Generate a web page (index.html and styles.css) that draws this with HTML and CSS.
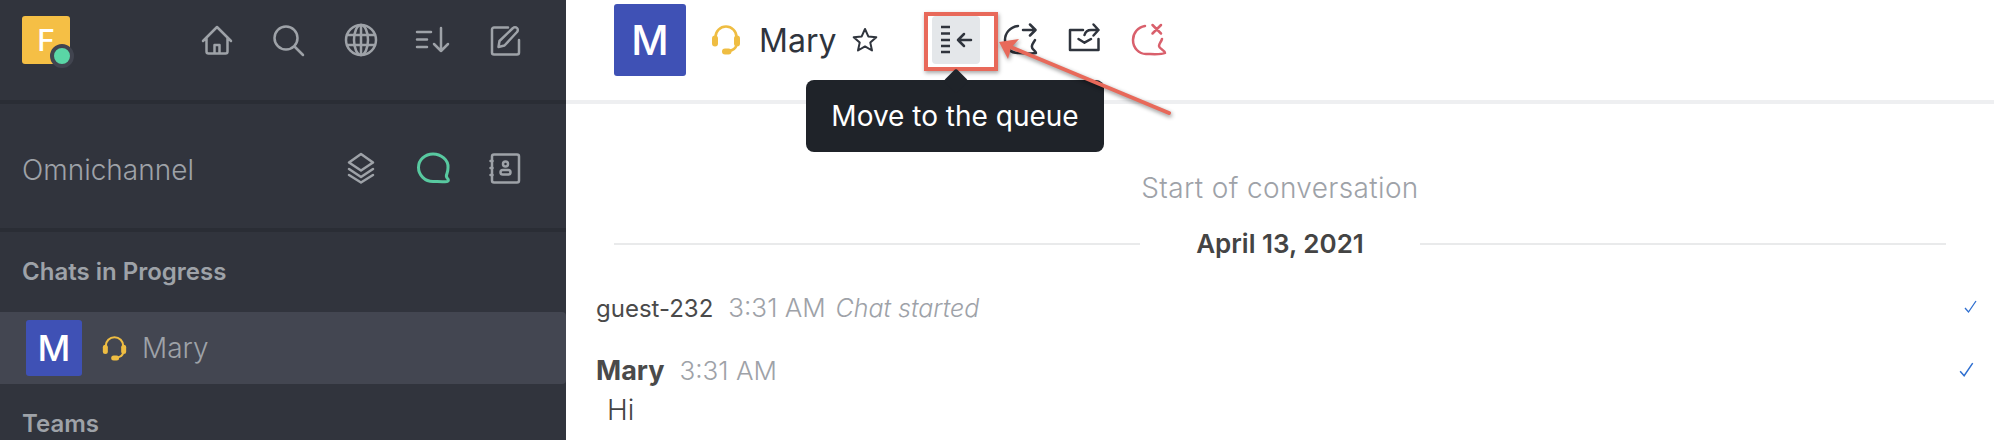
FILE: index.html
```html
<!DOCTYPE html>
<html lang="en">
<head>
    <meta charset="UTF-8">
    <meta name="viewport" content="width=device-width, initial-scale=1.0">
    <title>Omnichannel</title>
    <link rel="stylesheet" href="styles.css">
</head>
<body>
    <div class="sidebar">
        <div class="topbar">
            <div class="logo">F<span class="status-dot"></span></div>
            <div class="icons">
                <svg class="icon" viewBox="0 0 32 32"><path d="M2 17 16 3l14 14M5.500 14v13.500a2 2 0 0 0 2 2h17a2 2 0 0 0 2-2V14M13.500 29v-8h5v8"/></svg>
                <svg class="icon" viewBox="0 0 32 32"><circle cx="13" cy="14" r="11.500"/><path d="m22 23 8 8"/></svg>
                <svg class="icon" viewBox="0 0 32 32"><circle cx="16" cy="16" r="15"/><ellipse cx="16" cy="16" rx="7" ry="15"/><path d="M2 11h28M2 21h28M16 1v30"/></svg>
                <svg class="icon" viewBox="0 0 32 32"><path d="M0 8h14M0 15.500h10M0 23h10M24 4v23M17 20l7 7 7-7"/></svg>
                <svg class="icon" viewBox="0 0 32 32"><path d="M19 3.500H5a2 2 0 0 0-2 2v23a2 2 0 0 0 2 2h23a2 2 0 0 0 2-2V16"/><path d="m9.500 23 1-6L24 4a2.800 2.800 0 0 1 4 0 2.800 2.800 0 0 1 0 4L15.500 21.500z"/></svg>
            </div>
        </div>
        <div class="section-bar">
            <span class="section-title">Omnichannel</span>
            <div class="icons">
                <svg class="icon" viewBox="0 0 32 32"><path d="m16 2 12 8.500-12 8-12-8zM4 17l12 8 12-8M4 23l12 7.500 12-7.500"/></svg>
                <svg class="icon icon-green" viewBox="0 0 32 32"><path d="M16 2C8 2 1.500 8 1.500 15.500S8 29.500 16 29.500c4 0 10 .5 14 0 2-.5 1.500-2 .5-3-1.500-1.500-1.500-3-.5-5 .5-1.500 1-4 1-6C31.500 8 24 2 16 2z"/></svg>
                <svg class="icon" viewBox="0 0 32 32"><rect x="3" y="2.500" width="27" height="28" rx="2"/><path d="M1.500 9h2M1.500 16h2M1.500 23h2"/><circle cx="16.500" cy="12" r="2.500"/><rect x="11.500" y="18" width="10" height="4.500" rx="2.250"/></svg>
            </div>
        </div>
        <div class="list-title">Chats in Progress</div>
        <div class="chat-row">
            <div class="avatar">M</div>
            <svg class="headset" viewBox="0 0 30 30"><path d="M4.500 12a10.500 10.500 0 0 1 21 0M25.500 20q-1 5-8 6"/><rect class="fill" x="1" y="10.500" width="6" height="11" rx="3"/><rect class="fill" x="23" y="10.500" width="6" height="11" rx="3"/><rect class="fill" x="11" y="23.500" width="9.500" height="6" rx="3"/></svg>
            <span class="chat-name">Mary</span>
        </div>
        <div class="list-title list-title-teams">Teams</div>
    </div>

    <div class="main">
        <div class="header">
            <div class="avatar avatar-big">M</div>
            <svg class="headset headset-big" viewBox="0 0 30 30"><path d="M4.500 12a10.500 10.500 0 0 1 21 0M25.500 20q-1 5-8 6"/><rect class="fill" x="1" y="10.500" width="6" height="11" rx="3"/><rect class="fill" x="23" y="10.500" width="6" height="11" rx="3"/><rect class="fill" x="11" y="23.500" width="9.500" height="6" rx="3"/></svg>
            <span class="header-name">Mary</span>
            <svg class="star" viewBox="0 0 26 26"><path d="m13 2 3.300 7.400 8 .8-6 5.400 1.700 7.900-7-4.100-7 4.100 1.700-7.900-6-5.400 8-.8z"/></svg>
            <div class="actions">
                <div class="action action-active">
                    <svg class="action-icon" viewBox="0 0 32 32"><path class="butt" d="M1 3h9M1 9.500h9M1 16h9M1 22h9M1 28h9"/><path d="M18 16h13M24 10l-6 6 6 6"/></svg>
                    <div class="highlight"></div>
                    <div class="tooltip">Move to the queue</div>
                </div>
                <div class="action">
                    <svg class="action-icon" viewBox="0 0 32 32"><path d="M14 2C6 3 1 9 1 16c0 8 6 13 13 13 5 0 14 1 18 0 0-3-5-3-4-7 0-2 2-4 3-6M19 6h12M26 .5 31.500 6 26 11.500"/></svg>
                </div>
                <div class="action">
                    <svg class="action-icon" viewBox="0 0 32 32"><path d="M2 6v20h28.500V15M10.500 15l6 3.700 6.500-3.700M2 6h13M16.500 11Q18 6 23 6h7.500M25.500.5l5 5.500-5 5.500"/></svg>
                </div>
                <div class="action action-red">
                    <svg class="action-icon" viewBox="0 0 32 32"><path d="M13 2C6 3 1 9 1 16c0 8 6 14 13 14 5 0 15 1 19-1 0-3-6-4-6-7 0-2 2-4 3-7M20.500 1l8.500 8.500M29 1l-8.500 8.500"/></svg>
                </div>
            </div>
        </div>

        <div class="conversation">
            <div class="start-text">Start of conversation</div>
            <div class="date-divider"><span>April 13, 2021</span></div>
            <div class="message message-system">
                <div class="message-head">
                    <span class="sender">guest-232</span>
                    <span class="time">3:31 AM</span>
                    <em class="system-text">Chat started</em>
                </div>
                <svg class="check" viewBox="0 0 14 14"><path d="m1 8 3.500 4L12 1"/></svg>
            </div>
            <div class="message">
                <div class="message-head">
                    <span class="sender sender-bold">Mary</span>
                    <span class="time">3:31 AM</span>
                </div>
                <svg class="check check-big" viewBox="0 0 14 14"><path d="m1 8 3.500 4L12 1"/></svg>
            </div>
            <div class="message-body">Hi</div>
        </div>

        <svg class="arrow" viewBox="0 0 200 100"><path class="arrow-line" d="M170 74 14 9"/><path class="arrow-head" d="M0 3 20 0 12 9 9 20z"/></svg>
    </div>
</body>
</html>
```

FILE: styles.css
```css
* {
    box-sizing: border-box;
}
body {
    display: flex;
    height: 440px;
    margin: 0;
    overflow: hidden;
    font-family: Inter, "Liberation Sans", sans-serif;
    background-color: #fff;
}

/* sidebar */
.sidebar {
    width: 566px;
    height: 440px;
    flex-shrink: 0;
    overflow: hidden;
    background-color: #31343d;
    color: #9ea2a8;
}
.topbar {
    display: flex;
    justify-content: space-between;
    height: 104px;
    padding: 16px 45px 0 22px;
    border-bottom: 4px solid #2a2d35;
}
.logo {
    position: relative;
    display: flex;
    justify-content: center;
    align-items: center;
    width: 48px;
    height: 48px;
    border-radius: 3px;
    background-color: #f5bf45;
    color: #fff;
    font-size: 30px;
    font-weight: 500;
}
.status-dot {
    position: absolute;
    right: -4px;
    bottom: -4px;
    width: 24px;
    height: 24px;
    border: 4px solid #41444f;
    border-radius: 50%;
    background-color: #5ad6a6;
}
.icons {
    display: flex;
    gap: 40px;
}
.topbar .icons {
    padding-top: 8px;
}
.icon {
    width: 32px;
    height: 32px;
    overflow: visible;
    fill: none;
    stroke: #9ea2a8;
    stroke-width: 2.500;
    stroke-linecap: round;
    stroke-linejoin: round;
}
.icon-green {
    stroke: #58c9a0;
    stroke-width: 3;
}
.section-bar {
    display: flex;
    justify-content: space-between;
    align-items: center;
    height: 128px;
    padding: 4px 45px 0 22px;
    border-bottom: 4px solid #2a2d35;
}
.section-title {
    margin-top: 4px;
    font-size: 28px;
    font-weight: 300;
}
.list-title {
    height: 80px;
    padding: 25px 22px 0;
    font-size: 24px;
    font-weight: 600;
    line-height: 29px;
}
.list-title-teams {
    height: 56px;
    padding-top: 25px;
}
.chat-row {
    display: flex;
    align-items: center;
    height: 72px;
    padding-left: 26px;
    border-radius: 0 4px 4px 0;
    background-color: #434651;
}
.avatar {
    display: flex;
    justify-content: center;
    align-items: center;
    width: 56px;
    height: 56px;
    border-radius: 3px;
    background-color: #3f51b5;
    color: #fff;
    font-size: 36px;
    font-weight: 500;
}
.headset {
    width: 25px;
    height: 25px;
    margin-left: 20px;
    fill: none;
    stroke: #efbd42;
    stroke-width: 2.500;
}
.headset .fill {
    fill: #efbd42;
    stroke: none;
}
.chat-name {
    margin-left: 15px;
    font-size: 28px;
    font-weight: 300;
}

/* main */
.main {
    position: relative;
    flex: 1;
    min-width: 0;
    height: 440px;
    overflow: hidden;
}
.header {
    display: flex;
    align-items: center;
    height: 104px;
    padding: 0 0 20px 48px;
    border-bottom: 4px solid #eeeff1;
}
.avatar-big {
    width: 72px;
    height: 72px;
    font-size: 41px;
}
.headset-big {
    width: 30px;
    height: 30px;
    margin-left: 25px;
}
.header-name {
    width: 75px;
    margin-left: 18px;
    font-size: 32px;
    font-weight: 400;
    color: #2f343d;
}
.star {
    width: 26px;
    height: 26px;
    margin-left: 18px;
    fill: none;
    stroke: #2f343d;
    stroke-width: 2;
    stroke-linejoin: round;
}
.actions {
    display: flex;
    gap: 16px;
    margin-left: 54px;
}
.action {
    position: relative;
    display: flex;
    justify-content: center;
    align-items: center;
    width: 48px;
    height: 48px;
    border-radius: 4px;
    color: #2f343d;
}
.action-active {
    background-color: #e4e7ea;
}
.action-red {
    color: #d9606c;
}
.action-icon {
    width: 32px;
    height: 32px;
    overflow: visible;
    fill: none;
    stroke: currentColor;
    stroke-width: 2.500;
    stroke-linecap: round;
    stroke-linejoin: round;
}
.action-icon .butt {
    stroke-linecap: butt;
}
.highlight {
    position: absolute;
    left: -8px;
    top: -4px;
    width: 74px;
    height: 59px;
    border: 4px solid #e8695a;
    box-shadow: 1px 2px 4px rgba(0, 0, 0, 0.35);
}
.tooltip {
    position: absolute;
    left: -126px;
    top: 64px;
    width: 298px;
    height: 72px;
    border-radius: 8px;
    background-color: #1f2329;
    color: #fff;
    font-size: 28px;
    line-height: 72px;
    text-align: center;
}
.tooltip::before {
    content: "";
    position: absolute;
    left: 141px;
    top: -8px;
    width: 18px;
    height: 18px;
    border-radius: 3px;
    background-color: #1f2329;
    transform: rotate(45deg);
}
.arrow {
    position: absolute;
    left: 433px;
    top: 39px;
    width: 200px;
    height: 100px;
    overflow: visible;
    filter: drop-shadow(1px 2px 2px rgba(0, 0, 0, 0.45));
}
.arrow-line {
    fill: none;
    stroke: #e8695a;
    stroke-width: 4;
    stroke-linecap: round;
}
.arrow-head {
    fill: #e8695a;
}

/* conversation */
.conversation {
    padding: 62px 48px 0 30px;
}
.start-text {
    padding-left: 18px;
    font-size: 28px;
    font-weight: 300;
    letter-spacing: 0.36px;
    line-height: 44px;
    text-align: center;
    color: #9ea2a8;
}
.date-divider {
    display: flex;
    justify-content: center;
    height: 30px;
    margin: 19px 0 0 18px;
    background: linear-gradient(#e9eaeb, #e9eaeb) center / 100% 2px no-repeat;
}
.date-divider span {
    width: 280px;
    background-color: #fff;
    color: #444;
    font-size: 26px;
    font-weight: 600;
    line-height: 30px;
    text-align: center;
}
.message {
    display: flex;
    justify-content: space-between;
    align-items: center;
    height: 36px;
    margin-top: 27px;
    margin-right: -32px;
}
.message-system {
    margin-top: 30px;
}
.message-head {
    display: flex;
    align-items: baseline;
    gap: 15px;
}
.sender {
    font-size: 24px;
    color: #4a4a4a;
}
.sender-bold {
    font-size: 27px;
    font-weight: 700;
}
.time {
    font-size: 26px;
    font-weight: 300;
    color: #9ea2a8;
}
.system-text {
    margin-left: -5px;
    font-size: 25px;
    font-weight: 300;
    color: #9ea2a8;
}
.check {
    width: 14px;
    height: 14px;
    fill: none;
    stroke: #2f6fd0;
    stroke-width: 1.300;
}
.check-big {
    width: 16px;
    height: 16px;
    margin-right: 3px;
}
.message-body {
    padding: 2px 0 0 11px;
    font-size: 28px;
    font-weight: 300;
    line-height: 40px;
    color: #444;
}
```
